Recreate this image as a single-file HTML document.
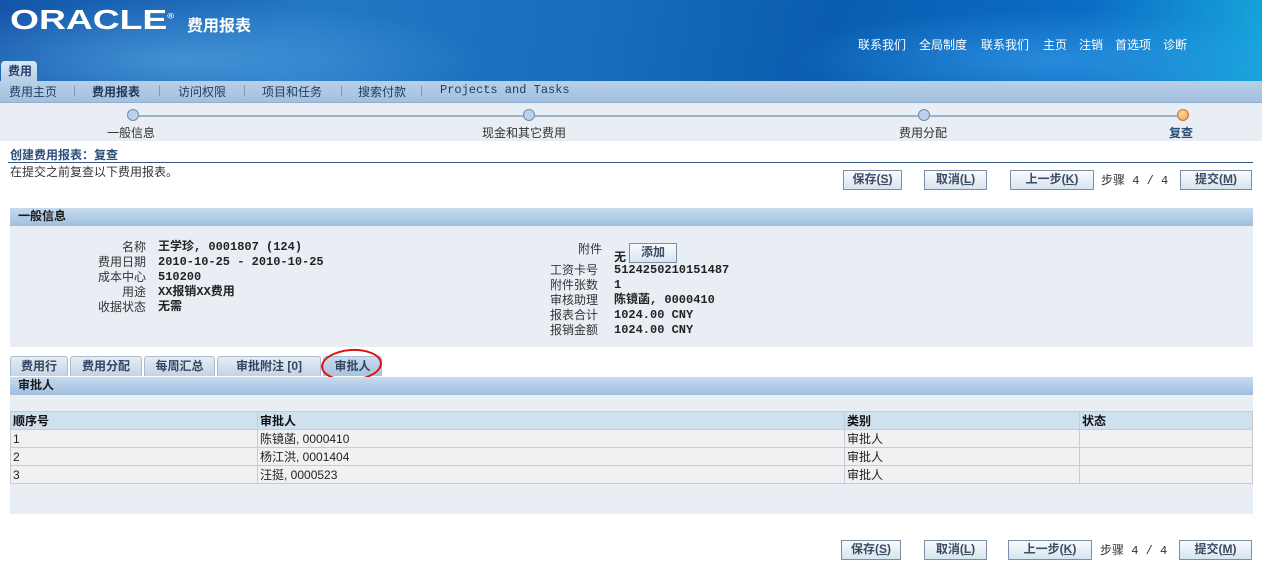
<!DOCTYPE html>
<html><head><meta charset="utf-8">
<style>
*{margin:0;padding:0;box-sizing:border-box}
body{width:1262px;height:571px;position:relative;overflow:hidden;background:#fff;font-family:"Liberation Sans","Noto Sans CJK SC",sans-serif;font-size:12px;color:#2b2b2b}
.a{position:absolute;white-space:nowrap}
.hdr{left:0;top:0;width:1262px;height:81px;background:radial-gradient(ellipse 300px 60px at 180px 60px,rgba(90,170,230,.6),transparent),radial-gradient(ellipse 260px 50px at 1050px 60px,rgba(60,160,235,.6),transparent),linear-gradient(100deg,#1455a8 0%,#2378c4 25%,#1a6fbd 45%,#0a5db0 65%,#0b6cc4 85%,#17a6dc 100%)}
.logo{left:10px;top:4px;color:#fff;font:bold 28px "Liberation Sans",sans-serif;transform:scaleX(1.33);transform-origin:0 0}
.ttl{left:187px;top:12px;color:#fff;font-size:16px;font-weight:bold}
.glob{top:36px;color:#fff;font-size:12px}
.tab0{left:1px;top:61px;width:36px;height:21px;background:linear-gradient(#dbe8f4,#b4cde6);border-radius:4px 4px 0 0;color:#25446d;font-weight:bold;font-size:12px;padding:1px 0 0 7px}
.nav{left:0;top:81px;width:1262px;height:22px;background:linear-gradient(#b9d0e7,#a3c0df);border-bottom:1px solid #8fb0d0}
.nav span{position:absolute;top:2px;color:#1f3a5e;font-size:12px}
.sep{color:#7f96b3!important}
.steps{left:0;top:103px;width:1262px;height:38px;background:#e9eef5}
.line{left:133px;top:115px;width:1050px;height:2px;background:#9ab4cb}
.dot{width:12px;height:12px;border-radius:50%;background:#bcd2ea;border:1px solid #6f8db0;top:109px}
.slab{top:124px;color:#333;font-size:12px}
.h1{left:10px;top:146px;color:#2d4e78;font-weight:bold;font-size:12px}
.rule{left:8px;top:162px;width:1245px;height:1px;background:#34598a}
.btn{height:20px;border:1px solid #7d8ea6;background:linear-gradient(#f8fbfd,#d6e4ef);color:#3d4a60;font-weight:bold;font-size:12px;text-align:center;line-height:17px}
.btn u{text-decoration:underline}
.sec{left:10px;width:1243px;height:18px;background:linear-gradient(#c6dbee,#9fbfde);color:#1b1b1b;font-weight:bold;font-size:12px;padding:0 0 0 8px;line-height:17px}
.panel{background:#e9eef5}
.lab{color:#333;text-align:right}
.val{font-weight:bold;font-family:"Liberation Mono","Noto Sans CJK SC",monospace;color:#222}
.tabs span{position:absolute;top:356px;height:20px;background:linear-gradient(#e6edf5,#c3d3e4);border:1px solid #a9bcd1;border-bottom:none;color:#34465f;font-weight:bold;font-size:12px;text-align:center;line-height:18px;border-radius:3px 3px 0 0}
table{position:absolute;left:10px;top:411px;width:1243px;border-collapse:collapse;font-size:12px}
th{background:#cfe0ef;text-align:left;font-weight:bold;height:17px;border:1px solid #c6ccd4;padding:0 2px;color:#111}
td{background:#f1f1f3;height:18px;border:1px solid #c6ccd4;padding:0 2px;color:#222}
</style></head><body>
<div class="a hdr"></div>
<div class="a logo">ORACLE<sup style="font-size:7px">®</sup></div>
<div class="a ttl">费用报表</div>
<div class="a glob" style="left:858px">联系我们</div>
<div class="a glob" style="left:919px">全局制度</div>
<div class="a glob" style="left:981px">联系我们</div>
<div class="a glob" style="left:1043px">主页</div>
<div class="a glob" style="left:1079px">注销</div>
<div class="a glob" style="left:1115px">首选项</div>
<div class="a glob" style="left:1163px">诊断</div>
<div class="a tab0">费用</div>
<div class="a nav">
<span style="left:9px">费用主页</span><span class="sep" style="left:73px">|</span>
<span style="left:92px;font-weight:bold">费用报表</span><span class="sep" style="left:158px">|</span>
<span style="left:178px">访问权限</span><span class="sep" style="left:243px">|</span>
<span style="left:262px">项目和任务</span><span class="sep" style="left:340px">|</span>
<span style="left:358px">搜索付款</span><span class="sep" style="left:420px">|</span>
<span style="left:440px;font-family:'Liberation Mono',monospace">Projects and Tasks</span>
</div>
<div class="a steps"></div>
<div class="a line"></div>
<div class="a dot" style="left:127px"></div>
<div class="a dot" style="left:523px"></div>
<div class="a dot" style="left:918px"></div>
<div class="a dot" style="left:1177px;background:radial-gradient(circle at 40% 35%,#ffd9a0,#f09a3a);border-color:#c07a30"></div>
<div class="a slab" style="left:107px">一般信息</div>
<div class="a slab" style="left:482px">现金和其它费用</div>
<div class="a slab" style="left:899px">费用分配</div>
<div class="a slab" style="left:1169px;font-weight:bold;color:#2d4e78">复查</div>
<div class="a h1">创建费用报表：复查</div>
<div class="a rule"></div>
<div class="a" style="left:10px;top:163px;color:#333">在提交之前复查以下费用报表。</div>

<div class="a btn" style="left:843px;top:170px;width:59px">保存(<u>S</u>)</div>
<div class="a btn" style="left:924px;top:170px;width:63px">取消(<u>L</u>)</div>
<div class="a btn" style="left:1010px;top:170px;width:84px">上一步(<u>K</u>)</div>
<div class="a" style="left:1101px;top:171px;font-family:'Liberation Mono','Noto Sans CJK SC',monospace;color:#333">步骤 4 / 4</div>
<div class="a btn" style="left:1180px;top:170px;width:72px">提交(<u>M</u>)</div>

<div class="a sec" style="top:208px">一般信息</div>
<div class="a panel" style="left:10px;top:226px;width:1243px;height:121px"></div>
<div class="a lab" style="left:60px;top:240px;width:86px;line-height:15px">名称<br>费用日期<br>成本中心<br>用途<br>收据状态</div>
<div class="a val" style="left:158px;top:240px;line-height:15px">王学珍, 0001807 (124)<br>2010-10-25 - 2010-10-25<br>510200<br>XX报销XX费用<br>无需</div>
<div class="a lab" style="left:540px;top:240px;width:62px">附件</div>
<div class="a val" style="left:614px;top:248px">无</div>
<div class="a btn" style="left:629px;top:243px;width:48px;height:20px">添加</div>
<div class="a lab" style="left:540px;top:263px;width:62px;line-height:15px;text-align:left;padding-left:10px">工资卡号<br>附件张数<br>审核助理<br>报表合计<br>报销金额</div>
<div class="a val" style="left:614px;top:263px;line-height:15px">5124250210151487<br>1<br>陈镜菡, 0000410<br>1024.00 CNY<br>1024.00 CNY</div>

<div class="tabs">
<span style="left:10px;width:58px">费用行</span>
<span style="left:70px;width:72px">费用分配</span>
<span style="left:144px;width:71px">每周汇总</span>
<span style="left:217px;width:104px">审批附注 [0]</span>
<span style="left:323px;width:59px;background:linear-gradient(#c9dcee,#a6c3e0)">审批人</span>
</div>
<div class="a" style="left:321px;top:349px;width:61px;height:32px;border:2px solid #e01010;border-radius:50%;transform:rotate(-4deg)"></div>
<div class="a sec" style="top:377px">审批人</div>
<div class="a panel" style="left:10px;top:395px;width:1243px;height:119px"></div>
<table>
<tr><th style="width:247px">顺序号</th><th style="width:587px">审批人</th><th style="width:235px">类别</th><th>状态</th></tr>
<tr><td>1</td><td>陈镜菡, 0000410</td><td>审批人</td><td></td></tr>
<tr><td>2</td><td>杨江洪, 0001404</td><td>审批人</td><td></td></tr>
<tr><td>3</td><td>汪挺, 0000523</td><td>审批人</td><td></td></tr>
</table>

<div class="a btn" style="left:841px;top:540px;width:60px">保存(<u>S</u>)</div>
<div class="a btn" style="left:924px;top:540px;width:63px">取消(<u>L</u>)</div>
<div class="a btn" style="left:1008px;top:540px;width:84px">上一步(<u>K</u>)</div>
<div class="a" style="left:1100px;top:541px;font-family:'Liberation Mono','Noto Sans CJK SC',monospace;color:#333">步骤 4 / 4</div>
<div class="a btn" style="left:1179px;top:540px;width:73px">提交(<u>M</u>)</div>
</body></html>
